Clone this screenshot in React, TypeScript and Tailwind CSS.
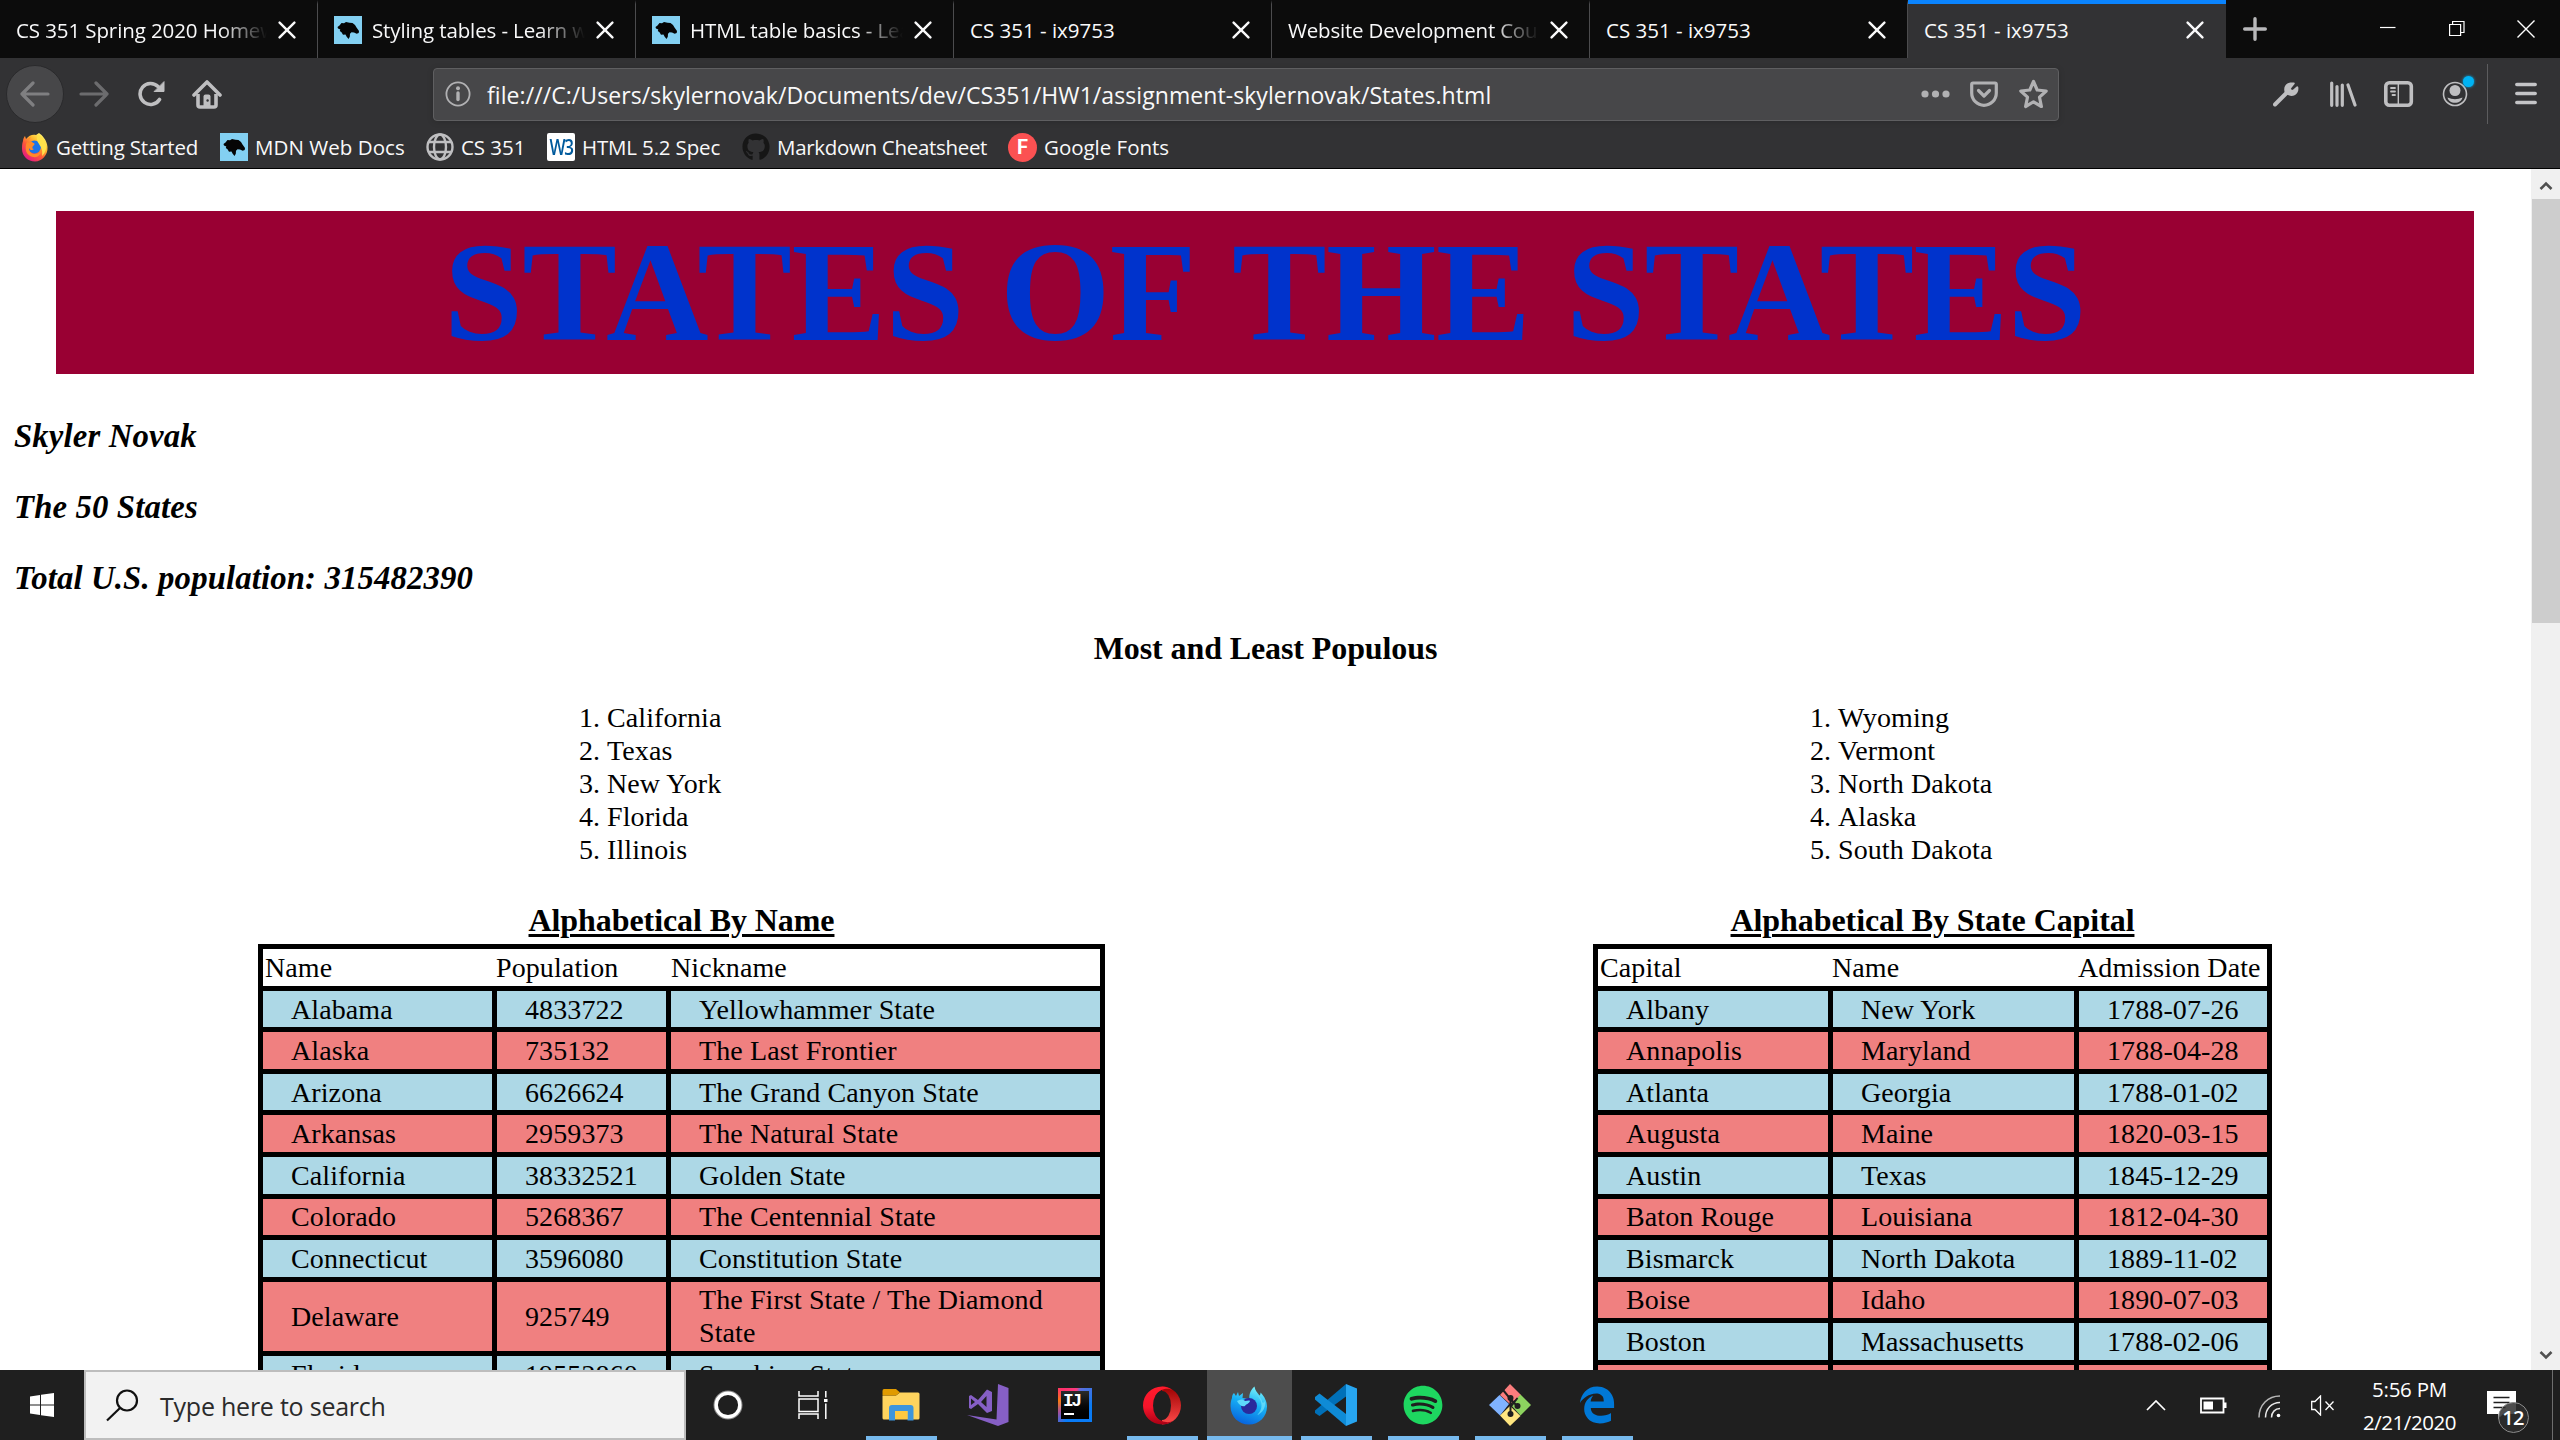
import React from 'react';
import type { ReactNode } from 'react';
import { FaGithub, FaSpotify, FaEdgeLegacy } from 'react-icons/fa6';

/* ---------- icons ---------- */

function MdnIcon() {
  return (
    <svg className="h-7 w-7 shrink-0" viewBox="0 0 28 28">
      <rect width="28" height="28" fill="#83d0f2" />
      <path
        d="M3.500 11l2-1.500L7.500 7l2.500.3L12 6l3.500.8 3 .2 2.500 2 1.500 2.500 2.500 3.500-.3 2-2 .8-2.700-1.300-2.500-.3-1.500 1.500-.2 3L14.500 23l-2-2.500-1-2-2.500.2-1.500-2.400-1.700-1.300.5-1.500L4 12.500z"
        fill="#050505"
      />
    </svg>
  );
}

function TabClose() {
  return (
    <svg className="mb-[2px] h-[18px] w-[18px] shrink-0" viewBox="0 0 18 18" fill="none" stroke="#f9f9fa" strokeWidth="2.4" strokeLinecap="round">
      <path d="M1.6 1.6L16.4 16.4M16.4 1.6L1.6 16.4" />
    </svg>
  );
}

function FirefoxIcon() {
  return (
    <svg className="h-[29px] w-7 shrink-0" viewBox="0 0 28 29">
      <defs>
        <linearGradient id="fxOuter" x1="0.85" y1="0.1" x2="0.2" y2="0.95">
          <stop offset="0" stopColor="#fff36e" />
          <stop offset="0.3" stopColor="#ffbd2f" />
          <stop offset="0.6" stopColor="#ff5b36" />
          <stop offset="1" stopColor="#e31587" />
        </linearGradient>
      </defs>
      <path d="M2 8c0-2 1-4 2-5l1 3c3-4 7-5 10-4l3-2c3 2 8 7 8.500 14C27 22 21 28.500 14 28.500S1 23 1 16c0-3 0-5 1-8z" fill="url(#fxOuter)" />
      <circle cx="13.500" cy="14" r="6.500" fill="#1d74e8" />
      <path d="M10 4c-3 1-4 4-3 6 2-2 4-2 5 0 2 0 2 2 0 3-1 1-1 3 1 3-2 2-4 1-5-1 0 4 3 6 6 6 4 0 7-3 6-8 2 8-3 12-8 11-7-1-9-9-6-15z" fill="#ff8a2a" />
      <path d="M17 1c5 3 9 8 8 15-1 4-3 6-4 7 1-6-1-9-3-12s-3-6-1-10z" fill="#ffe24a" />
    </svg>
  );
}

function GlobeIcon() {
  return (
    <svg className="h-7 w-7 shrink-0" viewBox="0 0 28 28" fill="none" stroke="#bfbfc1" strokeWidth="2.4">
      <circle cx="14" cy="14" r="12.500" />
      <ellipse cx="14" cy="14" rx="6" ry="12.500" />
      <path d="M3 9h22M3 19h22" />
    </svg>
  );
}

function WindowsLogo() {
  return (
    <svg className="h-6 w-6" viewBox="0 0 24 24" fill="#fff">
      <path d="M0 3.400L10 2v9.400H0zM11 1.800L24 0v11.400H11zM0 12.400h10V22L0 20.600zM11 12.400h13V24l-13-1.800z" />
    </svg>
  );
}

function FolderIcon() {
  return (
    <svg className="h-8 w-[38px]" viewBox="0 0 38 32">
      <path d="M1 6.500h13l4-3h18a1.500 1.500 0 0 1 1.500 1.500v24a1.500 1.500 0 0 1-1.500 1.500H2a1.500 1.500 0 0 1-1.500-1.500V7z" fill="#ffd45e" />
      <path d="M1 6.500h13l4-3L14 0H2Q.5 0 .5 2v4.500z" fill="#e09a00" />
      <path d="M7 31.500V19q0-3 3-3h18.500q3 0 3 3v12.500h-6v-9.500H13v9.500z" fill="#3d95dc" />
      <path d="M13 22h12.500v8H13z" fill="#fdc83f" />
    </svg>
  );
}

function VisualStudioIcon() {
  return (
    <svg className="h-[42px] w-[42px]" viewBox="0 0 42 42" fill="#865fc5">
      <path d="M31 0l10.500 4v34L31 42 0 31l29.500 4.500z" />
      <path
        fillRule="evenodd"
        d="M2 12l2-1 7 5L20 5.500l5 2.500v19l-5 2-9-9-7 5-2-1zM4 14.500v6.500l4-3zM19.500 12L14 18l5.500 5z"
      />
    </svg>
  );
}

function IntelliJIcon() {
  return (
    <div className="h-[34px] w-[34px] bg-[conic-gradient(from_20deg,#5b6fdc,#0a7bf2_70deg,#087cfa_190deg,#a3509f_225deg,#f97a12_265deg,#fe2f6b_300deg,#fb3a80_345deg,#5b6fdc)] p-[3px]">
      <div className="flex h-7 w-7 flex-col bg-gradient-to-b from-[#2b2b2b] to-black pt-[1px] pl-[2px]">
        <span className="font-['Liberation_Mono'] text-[18px] leading-[18px] font-bold tracking-[-2.5px] text-white">IJ</span>
        <span className="mt-[3px] ml-[1px] h-[2px] w-[10px] bg-white" />
      </div>
    </div>
  );
}

function OperaIcon() {
  return (
    <svg className="h-[39px] w-[38px]" viewBox="0 0 38 39">
      <defs>
        <linearGradient id="opL" x1="0" y1="0" x2="0" y2="1">
          <stop offset="0" stopColor="#ff1b2d" />
          <stop offset="0.55" stopColor="#f5142a" />
          <stop offset="1" stopColor="#a70014" />
        </linearGradient>
        <linearGradient id="opR" x1="0" y1="0" x2="0" y2="1">
          <stop offset="0" stopColor="#9c0000" />
          <stop offset="1" stopColor="#ff4b4b" />
        </linearGradient>
      </defs>
      <path d="M19 .5a19 19 0 0 1 0 38z" fill="url(#opR)" />
      <path d="M19 .5C8.500.5 0 9 0 19.500s8.500 19 19 19c4 0 8-1 11-3.500-4 2-12 2-16.500-5V8.500C18 2 26 1.500 30 4.500 27 2 23 .5 19 .5z" fill="url(#opL)" />
      <ellipse cx="19" cy="19.500" rx="9" ry="14.500" fill="#1f1f1f" />
    </svg>
  );
}

function FirefoxBlueIcon() {
  return (
    <svg className="h-[39px] w-[38px]" viewBox="0 0 38 39">
      <defs>
        <linearGradient id="fbBody" x1="0.7" y1="0" x2="0.35" y2="1">
          <stop offset="0" stopColor="#7df3fb" />
          <stop offset="0.45" stopColor="#17b1f5" />
          <stop offset="1" stopColor="#0762dd" />
        </linearGradient>
      </defs>
      <path d="M2 12c0-2 .5-4 2-5l2 3 2-4 1 4 4-3-.5 5 7 1c-1-5 2-10 5-12.500.500 4 3 6 5 9 1-1 1-2 1-3 4 4 6.500 9 6.500 14C37 31 29 38.500 19 38.500S.5 31 .5 20c0-3 .5-6 1.500-8z" fill="url(#fbBody)" />
      <circle cx="19" cy="20" r="8" fill="#2a2a9c" />
      <path d="M7 15c3-2 6-2 8 0 2 0 4-1 5 0-1 3-4 3-5 5-3 1-6-1-8-5z" fill="#5fd9fb" />
      <path d="M27 9c6 6 6 15 0 20 6-2 9-8 8-14-1 2-2 2-3 1 0-3-2-5-5-7z" fill="#6fe0fb" opacity="0.75" />
    </svg>
  );
}

function VsCodeIcon() {
  return (
    <svg className="h-[42px] w-[42px]" viewBox="0 0 42 42">
      <path d="M0 26.500L31 0v12.500L4.500 32 0 29z" fill="#0070b8" />
      <path d="M0 13l4.500-3.500L31 30v12L0 15.500z" fill="#0f8bd6" />
      <path d="M31 0l11 4.500v33L31 42z" fill="#27a5f0" />
    </svg>
  );
}

function GitIcon() {
  return (
    <svg className="h-[42px] w-[42px]" viewBox="0 0 42 42">
      <path d="M21 0l11 11-11 9-10-9z" fill="#fb7d7d" />
      <path d="M10.500 11L20 20l-9 11.500L0 21z" fill="#80b3ff" />
      <path d="M31.500 10.500L42 21 31.500 31.500 22 21z" fill="#8dd35f" />
      <path d="M21 22l10.500 10L21 42 11 31.500z" fill="#ffe680" />
      <path d="M14 6l7.500 9v16M21.500 15l7.500 8M21.500 23l7-9" stroke="#1f1f1f" strokeWidth="2" fill="none" />
      <circle cx="21.500" cy="14" r="3" fill="#1f1f1f" />
      <circle cx="28.500" cy="22" r="3" fill="#1f1f1f" />
      <circle cx="21.500" cy="30" r="3" fill="#1f1f1f" />
    </svg>
  );
}

/* ---------- browser chrome ---------- */

const tabs: { title: string; mdn?: boolean; active?: boolean; fade?: boolean; track: string }[] = [
  { title: 'CS 351 Spring 2020 Homew', fade: true, track: 'tracking-[-0.1px]' },
  { title: 'Styling tables - Learn w', mdn: true, fade: true, track: 'tracking-[-0.12px]' },
  { title: 'HTML table basics - Lea', mdn: true, fade: true, track: 'tracking-[-0.12px]' },
  { title: 'CS 351 - ix9753', track: 'tracking-normal' },
  { title: 'Website Development Cou', fade: true, track: 'tracking-[-0.19px]' },
  { title: 'CS 351 - ix9753', track: 'tracking-normal' },
  { title: 'CS 351 - ix9753', active: true, track: 'tracking-normal' },
];

function TabBar() {
  return (
    <div className="flex h-[58px] bg-[#0c0c0c]">
      {tabs.map((t, i) => (
        <div
          key={i}
          className={
            t.active
              ? 'flex h-[58px] w-[318px] items-center border-t-4 border-[#0a84ff] bg-[#323234] pr-[22px] pl-4'
              : 'flex h-[58px] w-[318px] items-center border-t-4 border-r border-t-[#0c0c0c] border-r-[#4c4c4e] pr-[21px] pl-4'
          }
        >
          {t.mdn && (
            <div className="mr-[10px] mb-[2px]">
              <MdnIcon />
            </div>
          )}
          <span
            className={`mr-[11px] mb-[3px] flex-1 overflow-hidden text-[20.5px] leading-[30px] whitespace-nowrap text-[#f9f9fa] ${
              t.fade ? '[mask-image:linear-gradient(to_right,black_calc(100%-46px),transparent)]' : ''
            } ${t.track}`}
          >
            {t.title}
          </span>
          <TabClose />
        </div>
      ))}
      <svg className="mt-[17px] ml-[17px] h-6 w-6" viewBox="0 0 24 24" stroke="#b8b8ba" strokeWidth="3.400" strokeLinecap="round">
        <path d="M12 1.700v20.600M1.700 12h20.600" />
      </svg>
      <svg className="mt-[19px] ml-[113px] h-[18px] w-4" viewBox="0 0 16 18" stroke="#fff" strokeWidth="1.200">
        <path d="M0 8.500h15.500" />
      </svg>
      <svg className="mt-[19px] ml-[53px] h-[18px] w-4" viewBox="0 0 16 18" stroke="#fff" strokeWidth="1.200" fill="none">
        <path d="M.6 5.500h11v11H.6zM3.600 5.500V2.500H15V13.500H12" />
      </svg>
      <svg className="mt-[20px] ml-[52px] h-[18px] w-[18px]" viewBox="0 0 18 18" stroke="#fff" strokeWidth="1.400">
        <path d="M.5.500l17 17M17.500.500l-17 17" />
      </svg>
    </div>
  );
}

function NavBar() {
  return (
    <div className="flex h-[72px] items-center">
      <div className="ml-[6px] flex h-[58px] w-[58px] items-center justify-center rounded-full border border-[#2a2a2c] bg-[#474749]">
        <svg className="h-[26px] w-[30px]" viewBox="0 0 30 26" fill="none" stroke="#7f7f81" strokeWidth="3.200" strokeLinecap="round" strokeLinejoin="round">
          <path d="M28 13H2M13 2L2 13l11 11" />
        </svg>
      </div>
      <svg className="ml-[15px] h-[26px] w-[30px]" viewBox="0 0 30 26" fill="none" stroke="#6c6c6e" strokeWidth="3.200" strokeLinecap="round" strokeLinejoin="round">
        <path d="M2 13h26M17 2l11 11-11 11" />
      </svg>
      <svg className="ml-[29px] h-[26px] w-[27px]" viewBox="0 0 27 26" fill="none" stroke="#bfbfc1" strokeWidth="3.600" strokeLinecap="round">
        <path d="M21.500 18.500A10.500 10.500 0 1 1 20 5.500" />
        <path d="M26 1v9.500h-9.500z" fill="#bfbfc1" stroke="#bfbfc1" strokeWidth="1" strokeLinejoin="round" />
      </svg>
      <svg className="ml-[27px] h-[30px] w-[30px]" viewBox="0 0 30 30">
        <path d="M2 16L15 3l13 13" fill="none" stroke="#bfbfc1" strokeWidth="3.600" strokeLinecap="round" strokeLinejoin="round" />
        <path d="M6 15v11q0 2 2 2h14q2 0 2-2V15" fill="none" stroke="#bfbfc1" strokeWidth="3.600" />
        <path d="M11.500 28V17.500q0-2 2-2h3q2 0 2 2V28z" fill="#bfbfc1" />
        <circle cx="15.600" cy="21.500" r="1.200" fill="#323234" />
      </svg>

      <div className="ml-[211px] flex h-[53px] w-[1626px] items-center rounded-[4px] border border-[#5f5f61] bg-[#474749] shadow-[0_1px_6px_rgba(0,0,0,0.15)]">
        <svg className="ml-[11px] h-[26px] w-[26px]" viewBox="0 0 26 26" fill="none" stroke="#b1b1b3">
          <circle cx="13" cy="13" r="11.600" strokeWidth="1.800" />
          <path d="M13 12v6.500" strokeWidth="3.400" strokeLinecap="round" />
          <circle cx="13" cy="7.200" r="2" fill="#b1b1b3" stroke="none" />
        </svg>
        <span className="mt-[2px] ml-[16px] flex-1 text-[23px] leading-[30px] tracking-[0.07px] whitespace-nowrap text-[#f9f9fa]">
          file:///C:/Users/skylernovak/Documents/dev/CS351/HW1/assignment-skylernovak/States.html
        </span>
        <svg className="h-[8px] w-[29px]" viewBox="0 0 29 8" fill="#b1b1b3">
          <circle cx="4" cy="4" r="3.600" />
          <circle cx="14.500" cy="4" r="3.600" />
          <circle cx="25" cy="4" r="3.600" />
        </svg>
        <svg className="ml-[20px] h-[26px] w-7" viewBox="0 0 28 26" fill="none" stroke="#b1b1b3" strokeWidth="3.200" strokeLinecap="round" strokeLinejoin="round">
          <path d="M3 2h22q1.300 0 1.300 1.300V12a12.300 12.300 0 0 1-24.600 0V3.300Q1.700 2 3 2z" />
          <path d="M8.500 9.500L14 15l5.500-5.500" />
        </svg>
        <svg className="mr-[10px] ml-[21px] h-[30px] w-[29px]" viewBox="0 0 29 30" fill="none" stroke="#b1b1b3" strokeWidth="3.200" strokeLinejoin="round">
          <path d="M14.500 2.500l3.700 8.500 9 1-6.700 6.200 1.900 9.300-7.900-4.700-7.900 4.700 1.900-9.300L1.800 12l9-1z" />
        </svg>
      </div>

      <svg className="ml-[214px] h-[26px] w-[26px]" viewBox="0 0 26 26" fill="none" stroke="#bfbfc1" strokeLinecap="round">
        <path d="M2 23.500L13.500 12" strokeWidth="4" />
        <path d="M17.500 2.400l3.300 0-3.800 4.600.6 2.400 2.400.5 4.300-3.600c.9 6.500-5 9.200-9.500 6.700L12.500 10.500C11.500 6 13 3.500 17.500 2.400z" fill="#bfbfc1" strokeWidth="2" strokeLinejoin="round" />
      </svg>
      <svg className="ml-[31px] h-[26px] w-[27px]" viewBox="0 0 27 26" fill="none" stroke="#bfbfc1" strokeWidth="3.200" strokeLinecap="round">
        <path d="M1.700 2v22.300M7 5.500v18.800M12.300 4v20.300M18 4l7 20" />
      </svg>
      <svg className="ml-[27px] h-[26px] w-[30px]" viewBox="0 0 30 26" fill="none" stroke="#bfbfc1">
        <rect x="1.800" y="1.800" width="25.500" height="22.400" rx="3.500" strokeWidth="3.600" />
        <path d="M14.300 2v22" strokeWidth="1.400" />
        <path d="M7 7h4M7 10.500h4M8.500 14h2.500" strokeWidth="1.800" strokeLinecap="round" />
      </svg>
      <div className="relative ml-[28px] h-[26px] w-[26px]">
        <svg className="h-[26px] w-[26px]" viewBox="0 0 26 26" fill="#bfbfc1">
          <circle cx="13" cy="13" r="11.500" fill="none" stroke="#bfbfc1" strokeWidth="1.600" />
          <circle cx="13" cy="9.500" r="5.500" />
          <path d="M5.500 16.500q7.500 3.500 15 0c-.5 3-3.500 5.300-7.500 5.300s-7-2.300-7.500-5.300z" />
        </svg>
        <div className="absolute -top-[5px] left-[21px] h-[11px] w-[11px] rounded-full bg-[#00b3f4] shadow-[0_0_3px_#00b3f4]" />
      </div>
      <div className="ml-[19px] h-[60px] w-px bg-[#5c5c5e]" />
      <svg className="mb-px ml-[27px] h-[23px] w-[22px]" viewBox="0 0 22 23" stroke="#c4c4c6" strokeWidth="3.500" strokeLinecap="round">
        <path d="M1.800 2.500h18.400M1.800 11.500h18.400M1.800 20.500h18.400" />
      </svg>
    </div>
  );
}

function Bookmark({ icon, label, className }: { icon: ReactNode; label: string; className: string }) {
  return (
    <div className={`flex items-center ${className}`}>
      {icon}
      <span className="mb-px ml-[7px] text-[20.5px] leading-[30px] whitespace-nowrap text-[#f9f9fa]">{label}</span>
    </div>
  );
}

function BookmarksBar() {
  return (
    <div className="flex h-[34px] items-center pl-[21px]">
      <Bookmark className="w-[199px] tracking-[-0.19px]" icon={<FirefoxIcon />} label="Getting Started" />
      <Bookmark className="w-[206px] tracking-[0.05px]" icon={<MdnIcon />} label="MDN Web Docs" />
      <Bookmark className="w-[121px] tracking-[-0.05px]" icon={<GlobeIcon />} label="CS 351" />
      <Bookmark
        className="w-[195px] tracking-[-0.16px]"
        icon={
          <div className="flex h-7 w-7 shrink-0 items-center justify-center rounded-[2px] bg-white">
            <span className="scale-y-125 text-[17px] leading-7 font-semibold tracking-[-1.5px] text-[#005a9c]">W3</span>
          </div>
        }
        label="HTML 5.2 Spec"
      />
      <Bookmark className="w-[266px] tracking-[-0.31px]" icon={<FaGithub className="h-7 w-7 shrink-0 text-[#161616]" />} label="Markdown Cheatsheet" />
      <Bookmark
        className="tracking-[-0.02px]"
        icon={
          <div className="flex h-[29px] w-[29px] shrink-0 items-center justify-center rounded-full bg-[#fb5152] font-[Roboto] text-[20px] font-bold text-white">
            F
          </div>
        }
        label="Google Fonts"
      />
    </div>
  );
}

/* ---------- page ---------- */

type Row = { cells: [string, string, string]; h: string };

const byName: Row[] = [
  { cells: ['Alabama', '4833722', 'Yellowhammer State'], h: 'h-9' },
  { cells: ['Alaska', '735132', 'The Last Frontier'], h: 'h-[37px]' },
  { cells: ['Arizona', '6626624', 'The Grand Canyon State'], h: 'h-9' },
  { cells: ['Arkansas', '2959373', 'The Natural State'], h: 'h-[37px]' },
  { cells: ['California', '38332521', 'Golden State'], h: 'h-[37px]' },
  { cells: ['Colorado', '5268367', 'The Centennial State'], h: 'h-9 [&>div]:pb-px' },
  { cells: ['Connecticut', '3596080', 'Constitution State'], h: 'h-[37px]' },
  { cells: ['Delaware', '925749', 'The First State / The Diamond State'], h: 'h-[69px] [&>div]:pb-px' },
  { cells: ['Florida', '19552860', 'Sunshine State'], h: 'h-[37px]' },
];

const byCapital: Row[] = [
  { cells: ['Albany', 'New York', '1788-07-26'], h: 'h-9' },
  { cells: ['Annapolis', 'Maryland', '1788-04-28'], h: 'h-[37px]' },
  { cells: ['Atlanta', 'Georgia', '1788-01-02'], h: 'h-9' },
  { cells: ['Augusta', 'Maine', '1820-03-15'], h: 'h-[37px]' },
  { cells: ['Austin', 'Texas', '1845-12-29'], h: 'h-[37px]' },
  { cells: ['Baton Rouge', 'Louisiana', '1812-04-30'], h: 'h-9 [&>div]:pb-px' },
  { cells: ['Bismarck', 'North Dakota', '1889-11-02'], h: 'h-[37px]' },
  { cells: ['Boise', 'Idaho', '1890-07-03'], h: 'h-9 [&>div]:pb-px' },
  { cells: ['Boston', 'Massachusetts', '1788-02-06'], h: 'h-[37px]' },
  { cells: ['', '', ''], h: 'h-[37px]' },
];

function StateTable({ caption, head, rows, widths, headPads }: {
  caption: string;
  head: string[];
  rows: Row[];
  widths: string[];
  headPads: string[];
}) {
  return (
    <div className="flex flex-col">
      <div className="h-[43px] text-center text-[32px] leading-[38px] font-bold tracking-[-0.08px] underline decoration-[3px] underline-offset-[3px]">
        {caption}
      </div>
      <div className="flex flex-col gap-[5px] bg-black p-[5px]">
        <div className="flex h-[37px] items-center gap-[5px] bg-white">
          {head.map((h, i) => (
            <div key={h} className={`whitespace-nowrap ${widths[i]} ${headPads[i]}`}>
              {h}
            </div>
          ))}
        </div>
        {rows.map((r, k) => (
          <div key={k} className={`flex gap-[5px] ${r.h}`}>
            {r.cells.map((c, i) => (
              <div key={i} className={`flex items-center px-7 whitespace-nowrap last:whitespace-normal ${k % 2 ? 'bg-[#f08080]' : 'bg-[#add8e6]'} ${widths[i]}`}>
                {c}
              </div>
            ))}
          </div>
        ))}
      </div>
    </div>
  );
}

function NumberedList({ items }: { items: string[] }) {
  return (
    <ol>
      {items.map((s, i) => (
        <li key={s} className="flex">
          <span className="w-7 shrink-0">{i + 1}.</span>
          <span>{s}</span>
        </li>
      ))}
    </ol>
  );
}

function Page() {
  return (
    <div className="flex h-[1201px] overflow-hidden bg-white">
      <div className="h-[1201px] w-[2531px] overflow-hidden font-['Liberation_Serif',serif] text-[28px] leading-[33px] tracking-[0.1px] text-black">
        <h1 className="mt-[42px] ml-14 flex h-[163px] w-[2418px] justify-center gap-9 bg-[#990033] text-[142px] leading-[163px] font-bold tracking-[-0.6px] whitespace-nowrap text-[#0033cc]">
          <span>STATES</span> <span>OF</span> <span>THE</span> <span>STATES</span>
        </h1>
        <div className="mt-[43px] flex flex-col gap-[33px] pl-[14px] text-[32.76px] leading-[38px] font-bold tracking-[0.14px] italic">
          <h3>Skyler Novak</h3>
          <h3>The 50 States</h3>
          <h3>Total U.S. population: 315482390</h3>
        </div>
        <h3 className="mt-[32px] text-center text-[32px] leading-[38px] font-bold tracking-[-0.1px]">Most and Least Populous</h3>
        <div className="mt-[34px] flex pl-[579px]">
          <div className="w-[1231px]">
            <NumberedList items={['California', 'Texas', 'New York', 'Florida', 'Illinois']} />
          </div>
          <NumberedList items={['Wyoming', 'Vermont', 'North Dakota', 'Alaska', 'South Dakota']} />
        </div>
        <div className="mt-[35px] flex items-start gap-[488px] pl-[258px]">
          <StateTable
            caption="Alphabetical By Name"
            head={['Name', 'Population', 'Nickname']}
            rows={byName}
            widths={['w-[229px]', 'w-[169px]', 'w-[429px]']}
            headPads={['pl-[2px]', '-ml-[1px] mr-[1px]', '']}
          />
          <StateTable
            caption="Alphabetical By State Capital"
            head={['Capital', 'Name', 'Admission Date']}
            rows={byCapital}
            widths={['w-[230px]', 'w-[241px]', 'w-[188px]']}
            headPads={['pl-[2px]', '-ml-[1px] mr-[1px]', '-ml-[1px]']}
          />
        </div>
      </div>
      <div className="flex w-[29px] flex-col items-center bg-[#f0f0f0]">
        <svg className="mt-[12px] h-[10px] w-[14px]" viewBox="0 0 14 10" fill="none" stroke="#505050" strokeWidth="2.600">
          <path d="M1.500 8L7 2.500 12.500 8" />
        </svg>
        <div className="mt-[8px] h-[424px] w-[28px] bg-[#cdcdcd]" />
        <div className="flex-1" />
        <svg className="mb-[10px] h-[10px] w-[14px]" viewBox="0 0 14 10" fill="none" stroke="#505050" strokeWidth="2.600">
          <path d="M1.500 2L7 7.500 12.500 2" />
        </svg>
      </div>
    </div>
  );
}

/* ---------- taskbar ---------- */

const apps: { icon: ReactNode; state: 'idle' | 'open' | 'active' }[] = [
  { icon: <FolderIcon />, state: 'open' },
  { icon: <VisualStudioIcon />, state: 'idle' },
  { icon: <IntelliJIcon />, state: 'idle' },
  { icon: <OperaIcon />, state: 'open' },
  { icon: <FirefoxBlueIcon />, state: 'active' },
  { icon: <VsCodeIcon />, state: 'open' },
  { icon: <FaSpotify className="h-10 w-10 text-[#1ed760]" />, state: 'open' },
  { icon: <GitIcon />, state: 'open' },
  { icon: <FaEdgeLegacy className="h-[38px] w-[38px] text-[#0078d7]" />, state: 'open' },
];

function Taskbar() {
  return (
    <div className="flex h-[70px] items-center bg-[#1f1f1f] text-white">
      <div className="flex w-[84px] justify-center">
        <WindowsLogo />
      </div>
      <div className="flex h-[70px] w-[602px] items-center border-2 border-[#bdbdbd] bg-[#f2f2f2]">
        <svg className="ml-[20px] h-[33px] w-[33px]" viewBox="0 0 33 33" fill="none" stroke="#111" strokeWidth="2.200">
          <circle cx="21" cy="11.500" r="10" />
          <path d="M14 19L1 31.500" />
        </svg>
        <span className="mt-[2px] ml-[21px] text-[25px] leading-[32px] tracking-[-0.23px] text-[#2b2b2b]">Type here to search</span>
      </div>
      <div className="flex w-[84px] justify-center">
        <svg className="h-[30px] w-[30px]" viewBox="0 0 30 30" fill="none">
          <circle cx="15" cy="15" r="13.500" stroke="#8a8a8a" strokeWidth="2" />
          <circle cx="15" cy="15" r="11.800" stroke="#fff" strokeWidth="3.400" />
        </svg>
      </div>
      <div className="flex w-[88px] justify-center pr-[3px]">
        <svg className="h-7 w-[30px]" viewBox="0 0 30 28" fill="none" stroke="#fff" strokeWidth="1.500">
          <path d="M1 0v5h19V0M1 8h19v12.500H1zM1 28v-5h19v5M27.800 0v6.500M27.800 12.500V28" />
          <rect x="26" y="8" width="3.500" height="3" fill="#fff" stroke="none" />
        </svg>
      </div>
      {apps.map((a, i) => (
        <div key={i} className="flex w-[87px] justify-center">
          <div className={`flex h-[70px] flex-col ${a.state === 'active' ? 'w-[85px] bg-[#4d4d4d]' : 'w-[71px]'}`}>
            <div className="flex flex-1 items-center justify-center pt-1 pr-px">{a.icon}</div>
            <div className={`h-1 ${a.state === 'idle' ? '' : 'bg-[#76b9ed]'}`} />
          </div>
        </div>
      ))}
      <svg className="ml-[505px] h-[11px] w-5" viewBox="0 0 20 11" fill="none" stroke="#fff" strokeWidth="1.700">
        <path d="M1 10L10 1l9 9" />
      </svg>
      <svg className="ml-[34px] h-[17px] w-[27px]" viewBox="0 0 27 17" fill="none" stroke="#fff" strokeWidth="1.800">
        <path d="M1 1.500h22.500v14H1z" />
        <path d="M3.500 4.500h9.500v8H3.500zM24 5.500h2.500v5.500H24z" fill="#fff" stroke="none" />
      </svg>
      <svg className="mt-[2px] ml-[31px] h-6 w-[23px]" viewBox="0 0 23 24" fill="none" stroke="#e8e8e8" strokeWidth="1.500">
        <path d="M1 23.500C1 11 10 2 22 2" opacity="0.75" />
        <path d="M7.500 23.500C7.500 15 13.500 8.500 22 8.500M13.500 23.500c0-5 3.500-9 8.500-9" />
        <circle cx="20.500" cy="21.500" r="1.800" fill="#fff" stroke="none" />
      </svg>
      <svg className="ml-[30px] h-[21px] w-[23px]" viewBox="0 0 23 21" fill="none" stroke="#fff" strokeWidth="1.300">
        <path d="M.7 6.500H4L9.500 1v19L4 14.500H.7zM14.500 6.500l8 8.500M22.500 6.500l-8 8.500" />
      </svg>
      <div className="mt-[2px] ml-[25px] flex w-[101px] flex-col items-center text-[20.5px] leading-[33px]">
        <span className="tracking-[-0.24px]">5:56 PM</span>
        <span className="tracking-[-0.45px]">2/21/2020</span>
      </div>
      <div className="relative ml-[27px] h-[54px] w-[43px]">
        <svg className="mt-[13px] h-[29px] w-[29px]" viewBox="0 0 29 29">
          <path d="M0 0h29v23H16l-5 5v-5H0z" fill="#fff" />
          <path d="M6.500 6.500h16M6.500 11.500h16M6.500 16.500h12" stroke="#1f1f1f" strokeWidth="1.600" />
        </svg>
        <div className="absolute top-[24px] left-[11px] flex h-[31px] w-[31px] items-center justify-center rounded-full border-[1.5px] border-[#8a8a8a] bg-[#2e2e2e]/85 pr-px text-[20px] font-semibold tracking-[-0.8px]">
          12
        </div>
      </div>
      <div className="ml-[22px] h-[70px] w-px bg-[#6e6e6e]" />
    </div>
  );
}

export default function App() {
  return (
    <div className="h-[1440px] w-[2560px] overflow-hidden bg-white font-['Open_Sans',sans-serif]">
      <div className="h-[169px] border-b border-black bg-[#323234]">
        <TabBar />
        <NavBar />
        <BookmarksBar />
      </div>
      <Page />
      <Taskbar />
    </div>
  );
}
